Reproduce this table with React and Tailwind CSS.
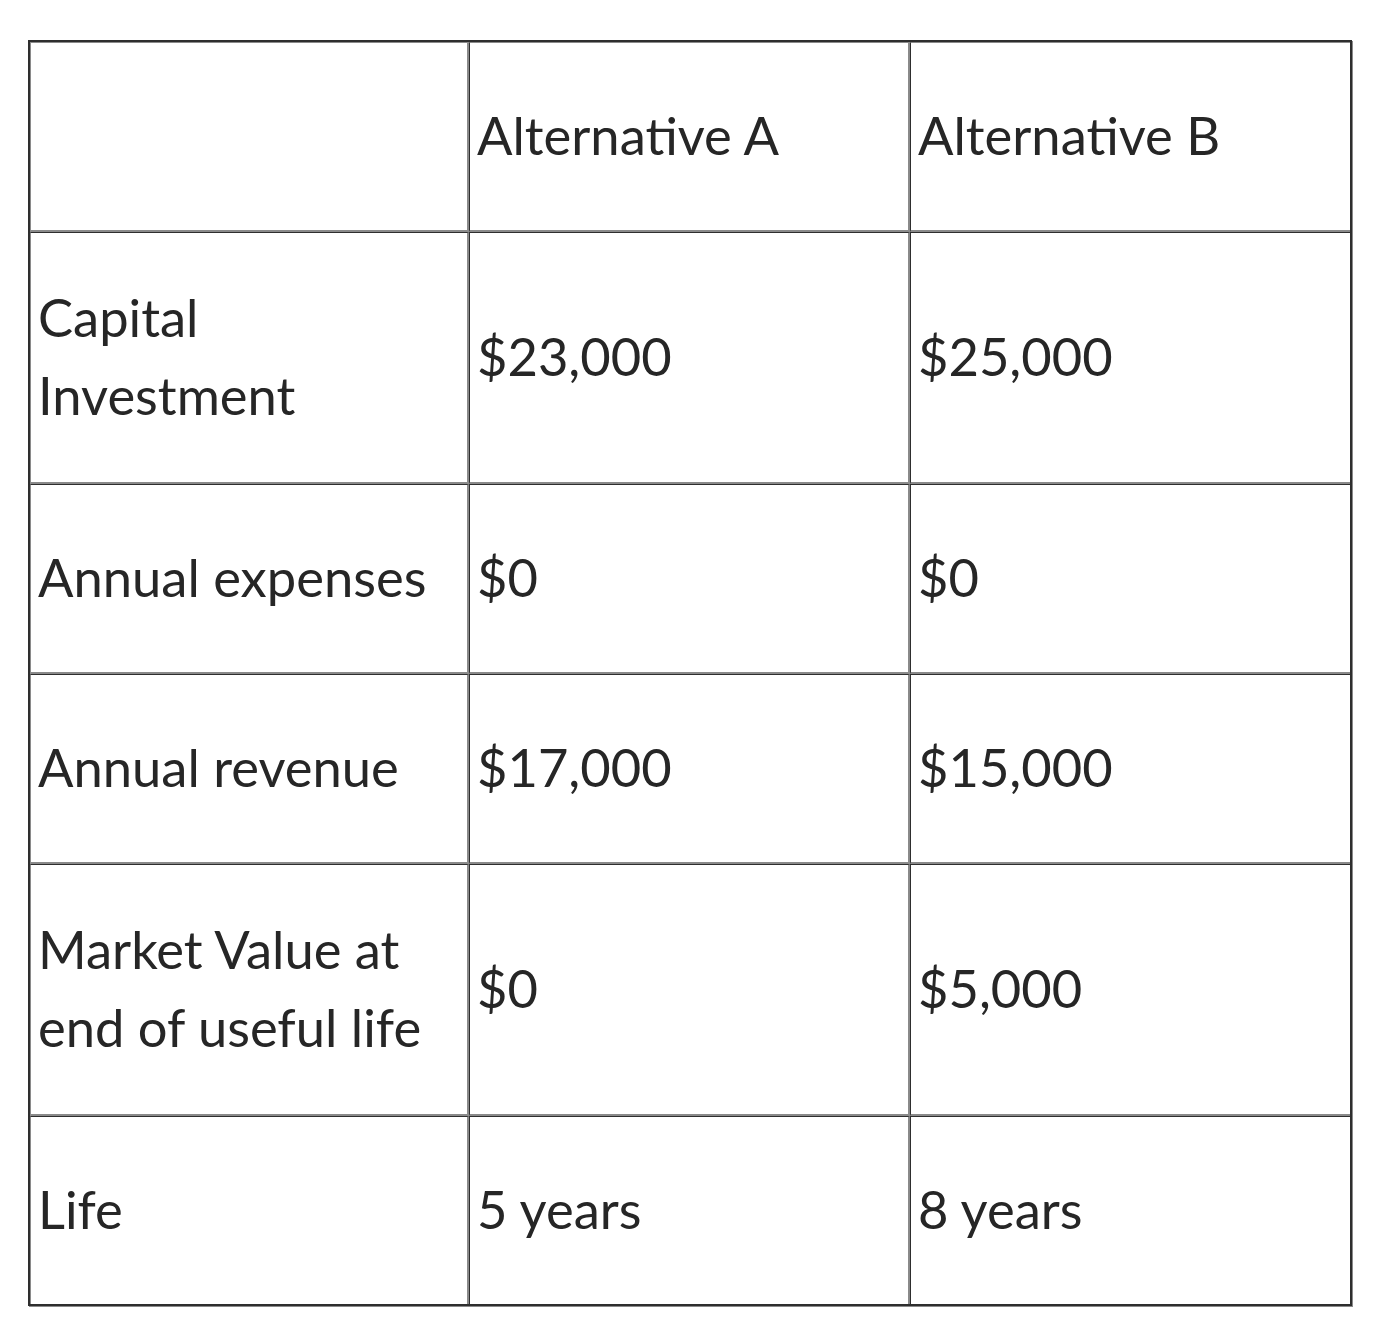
import React from "react";

const rows = [
  { h: "h-[190px]", cells: ["", "Alternative A", "Alternative B"] },
  { h: "h-[252px]", cells: [["Capital", "Investment"], "$23,000", "$25,000"] },
  { h: "h-[190px]", cells: ["Annual expenses", "$0", "$0"] },
  { h: "h-[190px]", cells: ["Annual revenue", "$17,000", "$15,000"] },
  { h: "h-[252px]", cells: [["Market Value at", "end of useful life"], "$0", "$5,000"] },
  { h: "h-[188px]", cells: ["Life", "5 years", "8 years"] },
];

function cellClass(r, c, nRows, nCols) {
  const cls = ["flex", "items-center", "pl-[7px]", "pr-[6px]", "pb-[4px]"];
  if (r === 0) cls.push("border-t", "border-t-[#8a8a8a]");
  else cls.push("border-t", "border-t-[#2e2e2e]");
  if (r < nRows - 1) cls.push("border-b-2", "border-b-[#8a8a8a]");
  if (c === 0) cls.push("border-l", "border-l-[#8a8a8a]");
  else cls.push("border-l", "border-l-[#2e2e2e]");
  if (c < nCols - 1) cls.push("border-r-2", "border-r-[#8a8a8a]");
  return cls.join(" ");
}

export default function App() {
  return (
    <div className="bg-white min-h-[1342px] pt-[40px] pl-[28px]">
      <div
        className="w-[1324px] border-2 border-[#2e2e2e] shadow-[1px_1px_0_#8a8a8a] text-[52.5px] leading-[78px] text-[#262626]"
        style={{ fontFamily: "Lato, 'Liberation Sans', sans-serif" }}
      >
        {rows.map((row, r) => (
          <div key={r} className={`grid grid-cols-[439px_441px_440px] ${row.h}`}>
            {row.cells.map((cell, c) => (
              <div key={c} className={cellClass(r, c, rows.length, 3)}>
                {Array.isArray(cell) ? (
                  <div>
                    {cell.map((line, i) => (
                      <div key={i}>{line}</div>
                    ))}
                  </div>
                ) : (
                  <span>{cell}</span>
                )}
              </div>
            ))}
          </div>
        ))}
      </div>
    </div>
  );
}
